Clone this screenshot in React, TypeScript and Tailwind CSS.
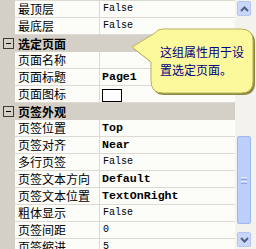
import React from "react";

type Row =
  | { cat: string }
  | { name: string; value?: string; bold?: boolean; box?: boolean };

const rows: Row[] = [
  { name: "最顶层", value: "False" },
  { name: "最底层", value: "False" },
  { cat: "选定页面" },
  { name: "页面名称", value: "" },
  { name: "页面标题", value: "Page1", bold: true },
  { name: "页面图标", box: true },
  { cat: "页签外观" },
  { name: "页签位置", value: "Top", bold: true },
  { name: "页签对齐", value: "Near", bold: true },
  { name: "多行页签", value: "False" },
  { name: "页签文本方向", value: "Default", bold: true },
  { name: "页签文本位置", value: "TextOnRight", bold: true },
  { name: "粗体显示", value: "False" },
  { name: "页签间距", value: "0" },
  { name: "页签缩进", value: "5" },
];

const cjk = { fontFamily: '"Noto Sans CJK SC", sans-serif' };
const mono = { fontFamily: '"Liberation Mono", monospace' };

function Chevron({ up }: { up: boolean }) {
  return (
    <svg width="9" height="6" viewBox="0 0 9 6">
      <path
        d={up ? "M1 5 L4.5 1.5 L8 5" : "M1 1 L4.5 4.5 L8 1"}
        fill="none"
        stroke="#4d6185"
        strokeWidth="2"
      />
    </svg>
  );
}

export default function App() {
  return (
    <div className="relative w-[256px] h-[249px] overflow-hidden bg-[#fcfcf9] flex">
      <div className="w-[235px] flex flex-col">
        <div className="h-[1px] flex shrink-0">
          <div className="w-[15px] bg-[#d4d0c8]" />
          <div className="flex-1 bg-[#dcdad3]" />
        </div>
        {rows.map((r, i) =>
          "cat" in r ? (
            <div key={i} className="h-[17px] shrink-0 bg-[#d4d0c8] flex items-center">
              <div className="ml-[3px] w-[11px] h-[11px] border border-[#3a3a3a] flex items-center justify-center">
                <div className="w-[5px] h-[1px] bg-black" />
              </div>
              <span className="ml-[4px] text-[12px] leading-[16px] font-bold text-black" style={cjk}>
                {r.cat}
              </span>
            </div>
          ) : (
            <div key={i} className="h-[17px] shrink-0 flex">
              <div className="w-[15px] bg-[#d4d0c8]" />
              <div className="flex-1 flex border-b border-[#dcdad3]">
                <div
                  className="w-[85px] border-r border-[#dcdad3] pl-[3px] text-[12px] leading-[16px] text-black whitespace-nowrap overflow-hidden"
                  style={cjk}
                >
                  {r.name}
                </div>
                <div className="flex-1 pl-[2px] flex items-center text-black whitespace-nowrap overflow-hidden">
                  {r.box ? (
                    <div className="w-[20px] h-[13px] border border-black bg-white mt-[2px]" />
                  ) : r.bold ? (
                    <span className="text-[11.6px] font-bold leading-[16px]" style={mono}>
                      {r.value}
                    </span>
                  ) : (
                    <span className="text-[10px] leading-[16px] pl-[1px]" style={mono}>
                      {r.value}
                    </span>
                  )}
                </div>
              </div>
            </div>
          )
        )}
      </div>
      <div className="w-[21px] bg-[#f3f2ec] flex flex-col pt-[1px] pl-[2px]">
        <div className="w-[14px] h-[15px] rounded-[2px] border border-[#b4c6f2] bg-[#c8d6fa] flex items-center justify-center">
          <Chevron up />
        </div>
        <div className="h-[120px]" />
        <div className="w-[14px] h-[88px] rounded-[2px] border border-[#9fb7ef] bg-[#bccefa] flex flex-col items-center justify-center gap-[1px]">
          <div className="w-[6px] h-[1px] bg-[#e8eefe]" />
          <div className="w-[6px] h-[1px] bg-[#8fa8e6]" />
          <div className="w-[6px] h-[1px] bg-[#e8eefe]" />
          <div className="w-[6px] h-[1px] bg-[#8fa8e6]" />
        </div>
        <div className="h-[8px]" />
        <div className="w-[14px] h-[15px] rounded-[2px] border border-[#b4c6f2] bg-[#c8d6fa] flex items-center justify-center">
          <Chevron up={false} />
        </div>
      </div>

      <svg className="absolute left-0 top-0" width="256" height="249" viewBox="0 0 256 249">
        <path
          d="M163 30 H242 Q254 30 254 42 V82 Q254 94 242 94 H163 Q152 94 152 82 V63 L133 48 L156 34 Q158 30 163 30 Z"
          fill="#8c8a40"
          transform="translate(1,1)"
        />
        <path
          d="M163 29 H241 Q253 29 253 41 V81 Q253 93 241 93 H163 Q151 93 151 81 V62 L132 47 L155 33 Q157 29 163 29 Z"
          fill="#fcf99c"
          stroke="#b9b360"
          strokeWidth="1"
        />
      </svg>
      <div
        className="absolute left-[160px] top-[43px] text-[12px] leading-[18px] text-[#000080] whitespace-nowrap"
        style={cjk}
      >
        <div>这组属性用于设</div>
        <div>置选定页面。</div>
      </div>
    </div>
  );
}
